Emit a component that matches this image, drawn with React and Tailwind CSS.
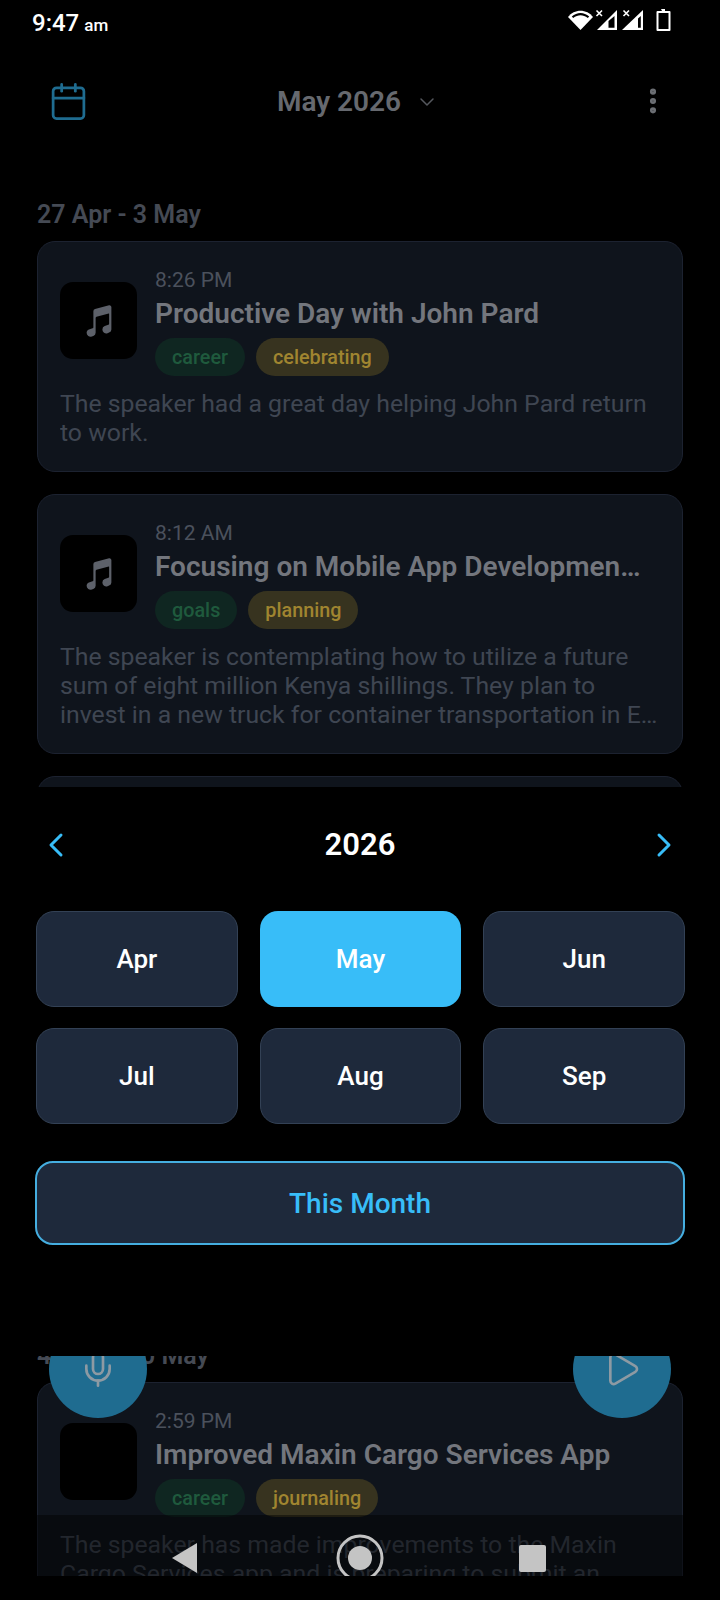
import React from "react";
import { Calendar, ChevronDown, ChevronLeft, ChevronRight, EllipsisVertical, Mic, Play } from "lucide-react";
import { IoMusicalNotes } from "react-icons/io5";

function Tag({ label, kind }) {
  const cls =
    kind === "green"
      ? "bg-[#0f2621] text-[#1f5a3d]"
      : "bg-[#37331f] text-[#a08530]";
  return (
    <span className={`h-[38px] px-[17px] pt-[2px] rounded-full flex items-center text-[19.8px] font-medium ${cls}`}>
      {label}
    </span>
  );
}

function Card({ time, title, tags, desc, icon = true }) {
  return (
    <div className="rounded-[18px] border border-[#1c2230] bg-[#0f141c] pl-[22px] pr-[22px] pt-[25px] pb-[24px]">
      <div className="flex items-start gap-[18px]">
        <div className="mt-[15px] w-[77px] h-[77px] shrink-0 rounded-[13px] bg-black flex items-center justify-center">
          {icon && <IoMusicalNotes className="text-[#5d616a]" size={36} />}
        </div>
        <div className="min-w-0 flex-1">
          <div className="text-[21px] leading-[26px] text-[#4b515c]">{time}</div>
          <div className="mt-[4px] pr-[16px] text-[28px] leading-[34px] font-semibold text-[#73767d] truncate">{title}</div>
          <div className="mt-[7px] flex gap-[11px]">
            {tags.map((t) => (
              <Tag key={t[0]} label={t[0]} kind={t[1]} />
            ))}
          </div>
        </div>
      </div>
      <p className="mt-[13px] text-[24.8px] leading-[29px] text-[#3f4652] line-clamp-3">{desc}</p>
    </div>
  );
}

function MonthButton({ label, active }) {
  return (
    <div
      className={`h-[96px] pt-[1px] rounded-[18px] flex items-center justify-center text-[26px] font-medium text-white ${
        active ? "bg-[#38bdf8]" : "bg-[#1e293b] border border-[#334155]"
      }`}
    >
      {label}
    </div>
  );
}

function StatusIcons() {
  return (
    <svg width="110" height="28" viewBox="0 0 110 28" className="text-white">
      <path d="M2 8 C8 -0.5 21 -0.5 27 8 L14.5 21 Z" fill="currentColor" />
      <path d="M5.8 7.6 C11 2.8 18 2.8 23.2 7.6 L21.8 9 C17 5.4 12 5.4 7.2 9 Z" fill="#000" />
      <path d="M30.5 1.5 l5.5 5.5 M36 1.5 l-5.5 5.5" stroke="currentColor" strokeWidth="1.6" />
      <path d="M31 21 L51 1 V21 Z" fill="currentColor" />
      <path d="M42.5 12 L48.5 7 V18.7 H42.5 Z" fill="#000" />
      <path d="M57.5 1.5 l5.5 5.5 M63 1.5 l-5.5 5.5" stroke="currentColor" strokeWidth="1.6" />
      <path d="M56 21 L77 1 V21 Z" fill="currentColor" />
      <path d="M72 9.5 L74.8 7 V18.7 H72 Z" fill="#000" />
      <path d="M95 0 h4 v2 h4.5 a1 1 0 0 1 1 1 v18 a1 1 0 0 1 -1 1 h-12 a1 1 0 0 1 -1 -1 v-18 a1 1 0 0 1 1 -1 h4.5 Z" fill="currentColor" />
      <rect x="92.5" y="4" width="10" height="16" fill="#000" />
    </svg>
  );
}

export default function App() {
  return (
    <div className="relative w-[720px] h-[1600px] bg-black overflow-hidden font-['Roboto',sans-serif]">
      <div className="h-[1576px] overflow-hidden">
        <div className="h-[46px] pl-[32px] pr-[44px] flex items-center justify-between">
          <div className="text-white font-medium flex items-baseline gap-[5px]">
            <span className="text-[24px]">9:47</span>
            <span className="text-[17px]">am</span>
          </div>
          <StatusIcons />
        </div>

        <div className="h-[110px] pl-[48px] pr-[51px] flex items-center justify-between">
          <Calendar size={41} strokeWidth={1.6} className="text-[#1f6c90]" />
          <div className="flex items-center gap-[14px] pr-[10px] pt-[1px]">
            <span className="text-[28px] font-semibold text-[#66696f]">May 2026</span>
            <ChevronDown size={24} strokeWidth={1.5} className="text-[#55585e]" />
          </div>
          <EllipsisVertical size={32} strokeWidth={2.6} className="text-[#6b6e73]" />
        </div>

        <div className="mt-[45px] px-[37px]">
          <div className="text-[25px] leading-[28px] font-semibold text-[#454a54] mb-[12px]">27 Apr - 3 May</div>
          <div className="flex flex-col gap-[22px]">
            <Card
              time="8:26 PM"
              title="Productive Day with John Pard"
              tags={[["career", "green"], ["celebrating", "yellow"]]}
              desc="The speaker had a great day helping John Pard return to work."
            />
            <Card
              time="8:12 AM"
              title="Focusing on Mobile App Development and Investment"
              tags={[["goals", "green"], ["planning", "yellow"]]}
              desc="The speaker is contemplating how to utilize a future sum of eight million Kenya shillings. They plan to invest in a new truck for container transportation in E…"
            />
            <div className="h-[258px] rounded-[18px] border border-[#1c2230] bg-[#0f141c]" />
            <div className="h-[250px] rounded-[18px] border border-[#1c2230] bg-[#0f141c]" />
          </div>
          <div className="mt-[36px] text-[25px] leading-[28px] font-semibold text-[#454a54] mb-[12px]">4 May - 10 May</div>
          <Card
            time="2:59 PM"
            title="Improved Maxin Cargo Services App"
            tags={[["career", "green"], ["journaling", "yellow"]]}
            desc="The speaker has made improvements to the Maxin Cargo Services app and is preparing to submit an update for review."
            icon={false}
          />
        </div>
      </div>

      {/* floating buttons */}
      <div className="absolute left-[49px] top-[1320px] w-[98px] h-[98px] rounded-full bg-[#1f6c90] flex items-center justify-center">
        <Mic size={40} strokeWidth={1.6} className="text-[#8d9aa3]" />
      </div>
      <div className="absolute left-[573px] top-[1320px] w-[98px] h-[98px] rounded-full bg-[#1f6c90] flex items-center justify-center">
        <Play size={40} strokeWidth={1.6} className="text-[#8d9aa3]" />
      </div>

      {/* month picker sheet */}
      <div className="absolute left-0 right-0 top-[787px] h-[569px] bg-black px-[36px]">
        <div className="mt-[34px] h-[48px] flex items-center justify-between">
          <ChevronLeft size={40} strokeWidth={1.8} className="text-[#38bdf8]" />
          <span className="text-[31px] font-semibold text-white">2026</span>
          <ChevronRight size={40} strokeWidth={1.8} className="text-[#38bdf8]" />
        </div>
        <div className="mt-[42px] -mr-[1px] grid grid-cols-3 gap-x-[22px] gap-y-[21px]">
          {["Apr", "May", "Jun", "Jul", "Aug", "Sep"].map((m) => (
            <MonthButton key={m} label={m} active={m === "May"} />
          ))}
        </div>
        <div className="mt-[37px] -mx-[1px] h-[84px] pt-[2px] rounded-[18px] bg-[#1e293b] border-2 border-[#45aee0] flex items-center justify-center text-[28px] font-medium text-[#38bdf8]">
          This Month
        </div>
      </div>

      {/* system navigation */}
      <div className="absolute left-0 right-0 top-[1515px] h-[61px] bg-black/45 flex items-center">
        <svg width="720" height="61" viewBox="0 0 720 61">
          <path d="M197 28 V58 L172 43 Z" fill="#c4c4c4" />
          <circle cx="360" cy="43" r="22" fill="none" stroke="#c4c4c4" strokeWidth="3" />
          <circle cx="360" cy="43" r="12" fill="#c4c4c4" />
          <rect x="519" y="30" width="27" height="27" rx="2" fill="#c4c4c4" />
        </svg>
      </div>
    </div>
  );
}
